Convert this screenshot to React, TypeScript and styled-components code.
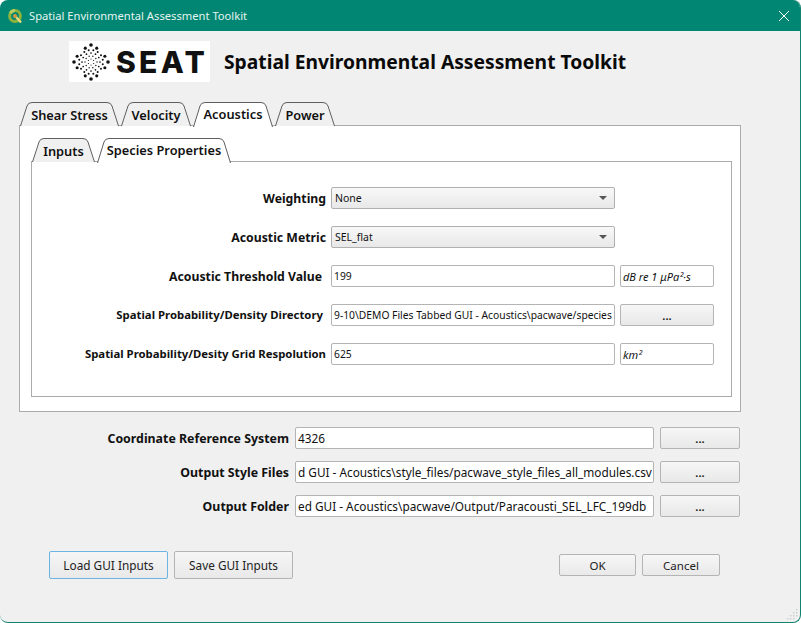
import styled, { createGlobalStyle } from "styled-components";

const GlobalStyle = createGlobalStyle`
  html, body {
    margin: 0;
    padding: 0;
    min-height: 623px;
  }

  body {
    font-family: "Noto Sans", "DejaVu Sans", sans-serif;
    color: #111111;
    background: linear-gradient(#ffffff 12px, #1d3a5c 12px, #1d3a5c 130px, #dde5ea 130px, #ffffff 600px);
  }
`;

// the sunburst part of the SEAT logo, rings of dots growing outwards
const logoDots = [
  { radius: 3, count: 6, size: 0.6, turn: 0 },
  { radius: 6, count: 10, size: 0.7, turn: 0.5 },
  { radius: 9, count: 12, size: 0.85, turn: 0 },
  { radius: 12, count: 16, size: 1, turn: 0.5 },
  { radius: 15, count: 8, size: 1.55, turn: 0.5 },
  { radius: 17, count: 4, size: 1.8, turn: 0 },
].flatMap((ring) =>
  Array.from({ length: ring.count }, (_, i) => {
    const angle = ((i + ring.turn) / ring.count) * Math.PI * 2 - Math.PI / 2;
    return {
      cx: 19 + Math.cos(angle) * ring.radius,
      cy: 19 + Math.sin(angle) * ring.radius,
      r: ring.size,
    };
  })
);

const gripDots = [
  [10, 1],
  [7, 4],
  [10, 4],
  [4, 7],
  [7, 7],
  [10, 7],
  [1, 10],
  [4, 10],
  [7, 10],
];

const TabShape = ({ width, height, active }: { width: number; height: number; active?: boolean }) => (
  <TabSvg width={width} height={height} viewBox={`0 0 ${width} ${height}`}>
    <path
      d={`M0.5 ${height} L7 4 Q8 0.5 12 0.5 L${width - 12} 0.5 Q${width - 8} 0.5 ${width - 7} 4 L${width - 0.5} ${height}`}
      fill={active ? "#ffffff" : "#f0f0f0"}
      stroke="#5f5f5f"
      strokeWidth="1"
    />
  </TabSvg>
);

const tabs = [
  { label: "Shear Stress", width: 99 },
  { label: "Velocity", width: 70 },
  { label: "Acoustics", width: 80, active: true },
  { label: "Power", width: 60 },
];

const innerTabs = [
  { label: "Inputs", width: 63 },
  { label: "Species Properties", width: 134, active: true },
];

const speciesRows = [
  { label: "Weighting", value: "None", kind: "combo" },
  { label: "Acoustic Metric", value: "SEL_flat", kind: "combo" },
  { label: "Acoustic Threshold Value", inset: 4, value: "199", kind: "unit", extra: "dB re 1 μPa²·s" },
  {
    label: "Spatial Probability/Density Directory",
    small: true,
    inset: 3,
    value: "9-10\\DEMO Files Tabbed GUI - Acoustics\\pacwave/species",
    kind: "browse",
  },
  { label: "Spatial Probability/Desity Grid Respolution", small: true, value: "625", kind: "unit", extra: "km²" },
];

const outputRows = [
  { label: "Coordinate Reference System", value: "4326" },
  { label: "Output Style Files", value: "d GUI - Acoustics\\style_files/pacwave_style_files_all_modules.csv" },
  { label: "Output Folder", value: "ed GUI - Acoustics\\pacwave/Output/Paracousti_SEL_LFC_199db" },
];

export default function App() {
  return (
    <>
      <GlobalStyle />
      <Window>
        <TitleBar>
          <svg width="16" height="16" viewBox="0 0 16 16">
            <circle cx="8" cy="8" r="5.4" fill="none" stroke="#8db33c" strokeWidth="3" />
            <path d="M3.4 5.2 A5.4 5.4 0 0 1 8 2.6" fill="none" stroke="#b9cf5f" strokeWidth="3" />
            <path d="M9 9 L14 14.5" stroke="#e8dc7a" strokeWidth="2.4" />
            <circle cx="8" cy="8" r="2" fill="#d9983f" />
          </svg>
          <WindowTitle>Spatial Environmental Assessment Toolkit</WindowTitle>
          <svg width="12" height="12" viewBox="0 0 12 12">
            <path d="M1 1 L11 11 M11 1 L1 11" stroke="#ffffff" strokeWidth="1" />
          </svg>
        </TitleBar>

        <Body>
          <Header>
            <Logo>
              <svg width="38" height="38" viewBox="0 0 38 38">
                {logoDots.map((dot, i) => (
                  <circle key={i} cx={dot.cx} cy={dot.cy} r={dot.r} fill="#111111" />
                ))}
              </svg>
              <LogoWord>SEAT</LogoWord>
            </Logo>
            <Heading>Spatial Environmental Assessment Toolkit</Heading>
          </Header>

          <TabBar>
            {tabs.map((tab) => (
              <Tab key={tab.label} $width={tab.width} $active={tab.active}>
                <TabShape width={tab.width} height={tab.active ? 25 : 24} active={tab.active} />
                <TabLabel>{tab.label}</TabLabel>
              </Tab>
            ))}
          </TabBar>
          <OuterPane>
            <InnerTabBar>
              {innerTabs.map((tab) => (
                <Tab key={tab.label} $width={tab.width} $active={tab.active}>
                  <TabShape width={tab.width} height={tab.active ? 25 : 24} active={tab.active} />
                  <TabLabel>{tab.label}</TabLabel>
                </Tab>
              ))}
            </InnerTabBar>
            <InnerPane>
              {speciesRows.map((row) => (
                <FormRow key={row.label}>
                  <FieldLabel $small={row.small} $inset={row.inset}>
                    {row.label}
                  </FieldLabel>
                  {row.kind === "combo" ? (
                    <Combo>
                      {row.value}
                      <ComboArrow />
                    </Combo>
                  ) : (
                    <Field>{row.value}</Field>
                  )}
                  {row.kind === "unit" && <UnitBox>{row.extra}</UnitBox>}
                  {row.kind === "browse" && <BrowseButton>...</BrowseButton>}
                </FormRow>
              ))}
            </InnerPane>
          </OuterPane>

          <OutputSection>
            {outputRows.map((row) => (
              <OutputRow key={row.label}>
                <OutputLabel>{row.label}</OutputLabel>
                <OutputField>{row.value}</OutputField>
                <OutputBrowse>...</OutputBrowse>
              </OutputRow>
            ))}
          </OutputSection>

          <Footer>
            <GuiButton $focused>Load GUI Inputs</GuiButton>
            <GuiButton>Save GUI Inputs</GuiButton>
            <DialogButtons>
              <DialogButton $width={77}>OK</DialogButton>
              <DialogButton $width={78}>Cancel</DialogButton>
            </DialogButtons>
          </Footer>
        </Body>
        <Grip width="12" height="12" viewBox="0 0 12 12">
          {gripDots.map(([x, y]) => (
            <rect key={`${x}-${y}`} x={x} y={y} width="1.4" height="1.4" fill="#c4cccc" />
          ))}
        </Grip>
      </Window>
    </>
  );
}

const Window = styled.div`
  position: relative;
  width: 800px;
  height: 622px;
  display: flex;
  flex-direction: column;
  overflow: hidden;
  background: #f0f0f0;
  border-right: 1px solid #12836f;
  border-bottom: 1px solid #12836f;
  border-radius: 8px;
`;

const TitleBar = styled.div`
  height: 31px;
  flex: none;
  display: flex;
  align-items: center;
  gap: 6px;
  padding: 0 10px 0 7px;
  background: #008672;
`;

const WindowTitle = styled.div`
  flex: 1;
  font-size: 11.2px;
  color: #e6f4f1;
`;

const Body = styled.div`
  flex: 1;
  display: flex;
  flex-direction: column;
  padding: 10px 60px 0 19px;
`;

const Header = styled.div`
  display: flex;
  align-items: center;
  gap: 14px;
  height: 41px;
  margin-left: 50px;
`;

const Logo = styled.div`
  width: 141px;
  height: 41px;
  display: flex;
  align-items: center;
  gap: 6px;
  padding-left: 3px;
  box-sizing: border-box;
  background: #ffffff;
`;

const LogoWord = styled.span`
  font-family: "Inter", sans-serif;
  font-size: 30px;
  font-weight: 800;
  letter-spacing: 3.3px;
  color: #111111;
`;

const Heading = styled.h1`
  margin: 0;
  font-size: 19.25px;
  font-weight: 700;
  color: #0a0a0a;
  white-space: nowrap;
`;

const TabBar = styled.div`
  display: flex;
  gap: 2px;
  height: 25px;
  margin: 19px 0 0 1px;
  align-items: flex-end;
  position: relative;
  z-index: 1;
`;

const InnerTabBar = styled(TabBar)`
  margin: 11px 0 0 1px;
`;

const Tab = styled.div<{ $width: number; $active?: boolean }>`
  position: relative;
  width: ${({ $width }) => $width}px;
  height: ${({ $active }) => ($active ? 25 : 24)}px;
  margin-bottom: ${({ $active }) => ($active ? -1 : 0)}px;
  padding: ${({ $active }) => ($active ? "0 0 2px" : "1px 0 0")};
  display: flex;
  align-items: center;
  justify-content: center;
  box-sizing: border-box;
  z-index: ${({ $active }) => ($active ? 2 : 1)};
`;

const TabSvg = styled.svg`
  position: absolute;
  left: 0;
  top: 0;
`;

const TabLabel = styled.span`
  position: relative;
  font-size: 12.8px;
  font-weight: 600;
  white-space: nowrap;
`;

const OuterPane = styled.div`
  width: 722px;
  height: 287px;
  flex: none;
  box-sizing: border-box;
  background: #ffffff;
  border: 1px solid #ababab;
  margin-top: -1px;
  padding: 0 8px 0 11px;
`;

const InnerPane = styled.div`
  height: 236px;
  box-sizing: border-box;
  background: #ffffff;
  border: 1px solid #ababab;
  margin-top: -1px;
  padding-top: 25px;
  display: flex;
  flex-direction: column;
  gap: 17px;
`;

const FormRow = styled.div`
  display: flex;
  align-items: center;
  gap: 5px;
  height: 22px;
`;

const FieldLabel = styled.div<{ $small?: boolean; $inset?: number }>`
  width: 294px;
  flex: none;
  box-sizing: border-box;
  padding-right: ${({ $inset }) => $inset ?? 0}px;
  padding-bottom: ${({ $small }) => ($small ? 2 : 0)}px;
  text-align: right;
  white-space: nowrap;
  font-weight: 700;
  font-size: ${({ $small }) => ($small ? 11.35 : 12.25)}px;
  color: #111111;
`;

const Combo = styled.div`
  position: relative;
  width: 284px;
  height: 22px;
  box-sizing: border-box;
  display: flex;
  align-items: center;
  padding-left: 3px;
  font-size: 10.5px;
  border: 1px solid #b0b0b0;
  border-radius: 2px;
  background: linear-gradient(#f8f8f8, #e8e8e8);
`;

const ComboArrow = styled.span`
  position: absolute;
  right: 7px;
  top: 8px;
  border-left: 4px solid transparent;
  border-right: 4px solid transparent;
  border-top: 4px solid #555555;
`;

const Field = styled.div`
  width: 284px;
  height: 22px;
  flex: none;
  box-sizing: border-box;
  display: flex;
  align-items: center;
  overflow: hidden;
  white-space: nowrap;
  padding: 0 2px;
  font-size: 10.3px;
  background: #ffffff;
  border: 1px solid #b4b4b4;
  border-radius: 2px;
`;

const UnitBox = styled.div`
  width: 94px;
  height: 22px;
  box-sizing: border-box;
  display: flex;
  align-items: center;
  padding-left: 2px;
  font-size: 11px;
  font-style: italic;
  border: 1px solid #b4b4b4;
  border-radius: 2px;
`;

const BrowseButton = styled.button`
  width: 94px;
  height: 22px;
  padding: 0;
  font-family: inherit;
  font-size: 11px;
  font-weight: 700;
  color: #222222;
  border: 1px solid #b4b4b4;
  border-radius: 2px;
  background: linear-gradient(#f6f6f6, #e8e8e8);
`;

const OutputSection = styled.div`
  display: flex;
  flex-direction: column;
  gap: 12px;
  margin-top: 15px;
`;

const OutputRow = styled.div`
  display: flex;
  align-items: center;
  gap: 6px;
  height: 22px;
`;

const OutputLabel = styled.div`
  width: 270px;
  flex: none;
  text-align: right;
  font-size: 12.35px;
  font-weight: 700;
  white-space: nowrap;
`;

const OutputField = styled(Field)`
  width: 359px;
  font-size: 11.8px;
`;

const OutputBrowse = styled(BrowseButton)`
  width: 80px;
`;

const Footer = styled.div`
  display: flex;
  align-items: center;
  gap: 6px;
  margin: 34px 0 0 30px;
  height: 28px;
`;

const GuiButton = styled.button<{ $focused?: boolean }>`
  width: 119px;
  height: 28px;
  padding: 0;
  font-family: inherit;
  font-size: 11.8px;
  color: #222222;
  border: 1px solid ${({ $focused }) => ($focused ? "#6cb4e4" : "#b4b4b4")};
  border-radius: 2px;
  background: linear-gradient(#f6f6f6, #e9e9e9);
`;

const DialogButtons = styled.div`
  display: flex;
  gap: 6px;
  margin-left: auto;
  margin-right: 20px;
`;

const DialogButton = styled.button<{ $width: number }>`
  width: ${({ $width }) => $width}px;
  height: 22px;
  padding: 0;
  font-family: inherit;
  font-size: 11.5px;
  color: #222222;
  border: 1px solid #b4b4b4;
  border-radius: 2px;
  background: linear-gradient(#f6f6f6, #e9e9e9);
`;

const Grip = styled.svg`
  position: absolute;
  right: 2px;
  bottom: 2px;
`;
